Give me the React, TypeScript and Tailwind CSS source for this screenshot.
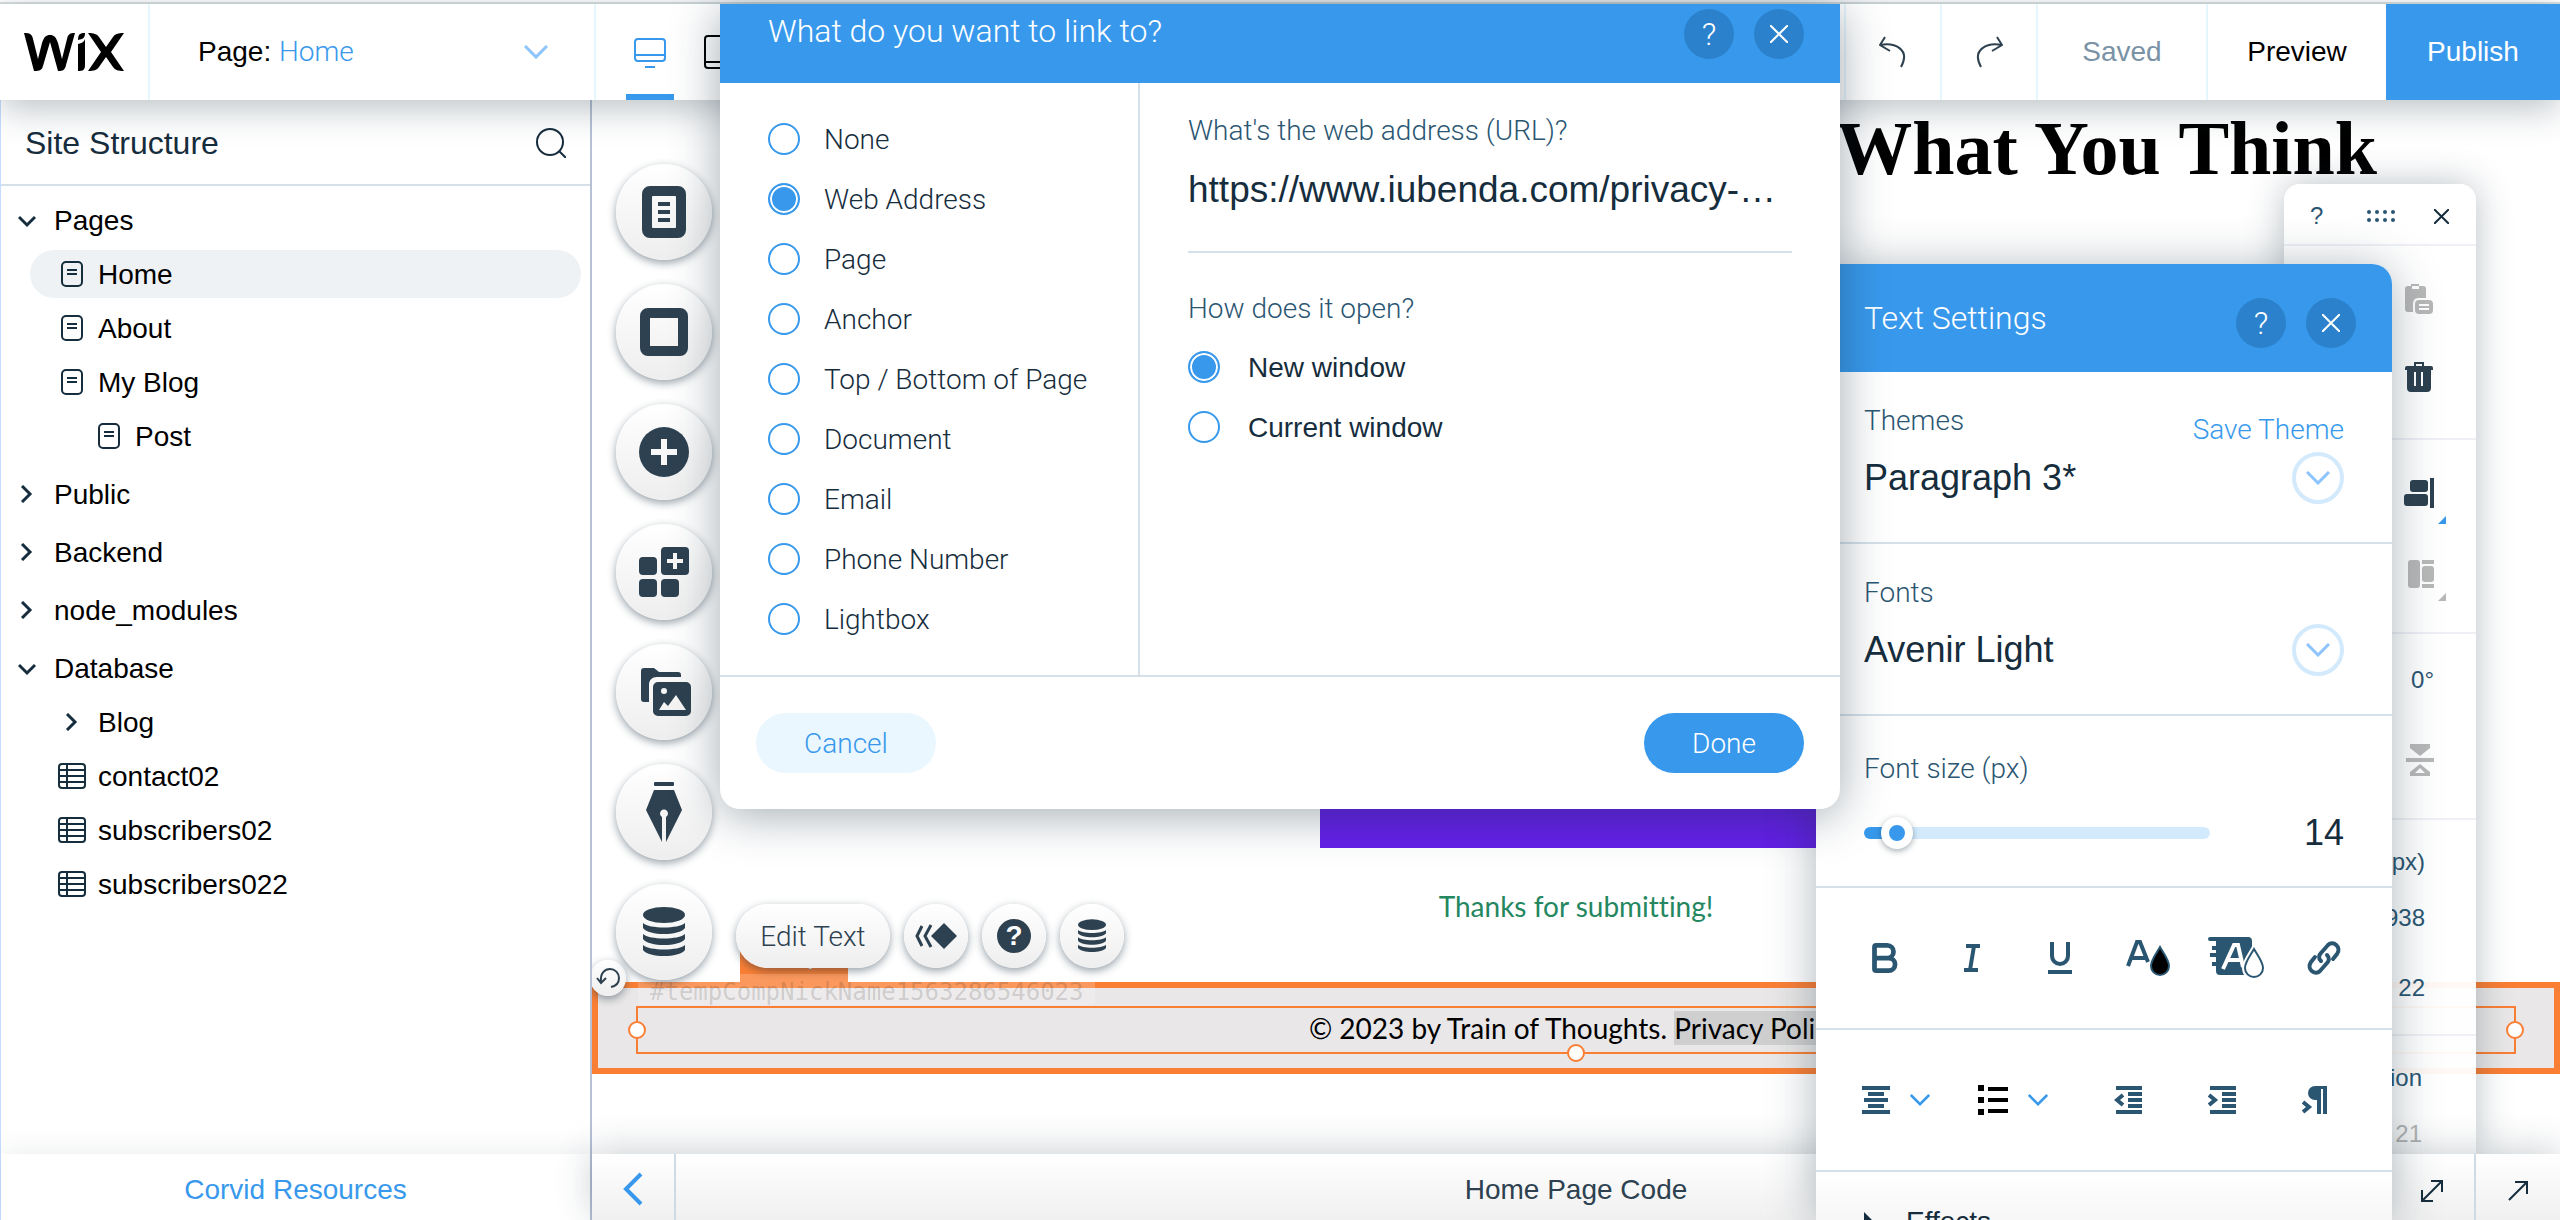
import React from 'react';
import { Bold } from 'lucide-react';

const linkTypes = [
  'None', 'Web Address', 'Page', 'Anchor', 'Top / Bottom of Page',
  'Document', 'Email', 'Phone Number', 'Lightbox',
];

type TreeRow = {
  label: string;
  kind: 'open' | 'closed' | 'page' | 'table';
  level: number;
  active?: boolean;
};

const tree: TreeRow[] = [
  { label: 'Pages', kind: 'open', level: 0 },
  { label: 'Home', kind: 'page', level: 1, active: true },
  { label: 'About', kind: 'page', level: 1 },
  { label: 'My Blog', kind: 'page', level: 1 },
  { label: 'Post', kind: 'page', level: 2 },
  { label: 'Public', kind: 'closed', level: 0 },
  { label: 'Backend', kind: 'closed', level: 0 },
  { label: 'node_modules', kind: 'closed', level: 0 },
  { label: 'Database', kind: 'open', level: 0 },
  { label: 'Blog', kind: 'closed', level: 1 },
  { label: 'contact02', kind: 'table', level: 1 },
  { label: 'subscribers02', kind: 'table', level: 1 },
  { label: 'subscribers022', kind: 'table', level: 1 },
];

const light = "font-[Roboto,'Liberation_Sans',sans-serif] font-light";
const round = 'flex items-center justify-center rounded-full bg-linear-to-b from-white to-[#eeeeee] text-[#2d4150] shadow-[0_3px_8px_rgba(22,45,61,0.45)]';

/* ---------- icons ---------- */

const WixLogo: React.FC = () => (
  <svg className="w-[100px] h-[39px]" viewBox="0 0 100 39" fill="currentColor">
    <path d="M0 0c6 0 8 1 9 6l5 20 4-16c2-6 4-8 8-8s6 2 8 8l4 16 5-20c1-5 3-6 8-6l-9 32c-1 5-3 6-8 6L26 9l-7 24c-1 4-3 5-9 5z" />
    <path d="M54 7c0-6 2-7 7-7 0 5-2 6-7 7z" />
    <path d="M54 11c4-1 6-2 7-5v26c0 5-2 6-7 6z" />
    <path d="M64 0c6 0 9 1 11 4l7 10 7-10c2-3 5-4 11-4L87 19l13 19c-6 0-9-1-11-4l-7-10-7 10c-2 3-5 4-11 4l13-19z" />
  </svg>
);

const Chevron: React.FC<{ className: string; width?: number }> = ({ className, width = 2 }) => (
  <svg className={className} viewBox="0 0 24 14" fill="none" stroke="currentColor" strokeWidth={width}>
    <path d="M1 1l11 11L23 1" />
  </svg>
);

const TreeIcon: React.FC<{ kind: TreeRow['kind'] }> = ({ kind }) => {
  if (kind === 'page') {
    return (
      <svg className="w-[22px] h-[26px]" viewBox="0 0 22 26" fill="none" stroke="#162d3d" strokeWidth="2">
        <rect x="1" y="1" width="20" height="24" rx="4" />
        <path d="M6 9h10M6 13h10" />
      </svg>
    );
  }
  if (kind === 'table') {
    return (
      <svg className="w-7 h-[26px]" viewBox="0 0 28 26" fill="none" stroke="#162d3d" strokeWidth="2">
        <rect x="1" y="1" width="26" height="24" rx="3" />
        <path d="M9 1v24M1 7h26M1 13h26M1 19h26" />
      </svg>
    );
  }
  return (
    <svg className="w-[18px] h-[18px]" viewBox="0 0 18 18" fill="none" stroke="#162d3d" strokeWidth="3">
      {kind === 'open' ? <path d="M1 6l8 8 8-8" /> : <path d="M4 1l8 8-8 8" />}
    </svg>
  );
};

const DatabaseIcon: React.FC<{ className: string }> = ({ className }) => (
  <svg className={className} viewBox="0 0 42 50" fill="currentColor">
    <ellipse cx="21" cy="8" rx="21" ry="8" />
    <path d="M0 16c6 6 36 6 42 0v5c-6 8-36 8-42 0z" />
    <path d="M0 27c6 6 36 6 42 0v5c-6 8-36 8-42 0z" />
    <path d="M0 38c6 6 36 6 42 0v5c-6 8-36 8-42 0z" />
  </svg>
);

const railTools = [
  {
    name: 'Menus and pages',
    icon: (
      <svg className="w-11 h-[52px]" viewBox="0 0 44 52" fill="currentColor">
        <path fillRule="evenodd" d="M8 0h28a8 8 0 018 8v36a8 8 0 01-8 8H8a8 8 0 01-8-8V8a8 8 0 018-8zm3 10a1 1 0 00-1 1v30a1 1 0 001 1h22a1 1 0 001-1V11a1 1 0 00-1-1z" />
        <path d="M16 16h12v4H16zM16 24h12v4H16zM16 32h12v4H16z" />
      </svg>
    ),
  },
  {
    name: 'Background',
    icon: (
      <svg className="w-12 h-12" viewBox="0 0 48 48" fill="currentColor">
        <path fillRule="evenodd" d="M8 0h32a8 8 0 018 8v32a8 8 0 01-8 8H8a8 8 0 01-8-8V8a8 8 0 018-8zm2 10v28h28V10z" />
      </svg>
    ),
  },
  {
    name: 'Add',
    icon: (
      <svg className="w-[50px] h-[50px]" viewBox="0 0 50 50">
        <circle cx="25" cy="25" r="25" fill="currentColor" />
        <path d="M12 25h26M25 12v26" stroke="#f7f7f7" strokeWidth="6" />
      </svg>
    ),
  },
  {
    name: 'Add apps',
    icon: (
      <svg className="w-[50px] h-[50px]" viewBox="0 0 50 50" fill="currentColor">
        <rect y="10" width="18" height="18" rx="4" />
        <rect x="22" width="28" height="28" rx="4" />
        <rect y="32" width="18" height="18" rx="4" />
        <rect x="22" y="32" width="18" height="18" rx="4" />
        <path d="M28 14h16M36 6v16" stroke="#f7f7f7" strokeWidth="4" />
      </svg>
    ),
  },
  {
    name: 'Media',
    icon: (
      <svg className="w-[50px] h-12 ml-1" viewBox="0 0 50 48" fill="currentColor">
        <path d="M3 0h10l5 4h19a3 3 0 013 3v2H16c-5 0-8 3-8 8v17H3a3 3 0 01-3-3V3a3 3 0 013-3z" />
        <path fillRule="evenodd" d="M17 14h28a5 5 0 015 5v24a5 5 0 01-5 5H17a5 5 0 01-5-5V19a5 5 0 015-5zm6 6a3 3 0 100 6 3 3 0 000-6zm-5 22h27L35 27l-8 11-4-4z" />
      </svg>
    ),
  },
  {
    name: 'Blog',
    icon: (
      <svg className="w-9 h-[60px]" viewBox="0 0 36 60" fill="currentColor">
        <rect x="8" width="20" height="4" rx="1" />
        <path fillRule="evenodd" d="M8 8h20l8 20-16 32V35a4 4 0 10-4 0v25L0 28z" />
        <path d="M17 36h2v24h-2z" fill="#f4f4f4" />
      </svg>
    ),
  },
  { name: 'Database', icon: <DatabaseIcon className="w-[42px] h-[50px]" /> },
];

/* ---------- shared controls ---------- */

const RadioOption: React.FC<{ group: string; label: string; checked?: boolean; className: string }> = ({ group, label, checked, className }) => (
  <label className={`flex items-center h-8 cursor-pointer text-[28px] text-[#162d3d] ${className}`}>
    <input
      type="radio"
      name={group}
      defaultChecked={checked}
      className="appearance-none shrink-0 w-8 h-8 rounded-full border-2 border-[#3899ec] bg-white checked:bg-[#3899ec] checked:shadow-[inset_0_0_0_2px_white]"
    />
    <span className="pt-[2px]">{label}</span>
  </label>
);

const DialogButtons: React.FC = () => (
  <div className="flex gap-5">
    <button type="button" aria-label="Help" className={`w-[50px] h-[50px] rounded-full bg-[#2b81cb] text-white text-[32px] leading-[50px] ${light}`}>?</button>
    <button type="button" aria-label="Close" className="w-[50px] h-[50px] rounded-full bg-[#2b81cb] flex items-center justify-center">
      <svg className="w-[18px] h-[18px]" viewBox="0 0 18 18" stroke="white" strokeWidth="2">
        <path d="M0 0l18 18M18 0L0 18" />
      </svg>
    </button>
  </div>
);

/* ---------- page parts ---------- */

const TopBar: React.FC = () => (
  <header className="relative z-10 flex h-24 shrink-0 bg-white text-[28px] shadow-[0_8px_36px_rgba(22,45,61,0.3)]">
    <a href="#" aria-label="Wix" className="w-[150px] border-r-2 border-[#e6f6fd] flex items-center justify-center">
      <WixLogo />
    </a>
    <button type="button" className="w-[446px] border-r-2 border-[#e6f6fd] flex items-center justify-between pl-12 pr-[46px]">
      <span>Page: <span className={`text-[#3899ec] ${light}`}>Home</span></span>
      <Chevron className="w-6 h-[14px] text-[#8cc4fb]" width={3} />
    </button>
    <nav className="flex flex-1 pl-[30px] gap-[30px]">
      <button type="button" aria-label="Desktop" className="w-12 border-b-6 border-[#3899ec] flex items-center justify-center">
        <svg className="w-8 h-[30px] mt-2" viewBox="0 0 32 30" fill="none" stroke="#3899ec" strokeWidth="2">
          <rect x="1" y="1" width="30" height="22" rx="3" />
          <path d="M1 17h30M11 29h10" />
        </svg>
      </button>
      <button type="button" aria-label="Mobile" className="flex items-center">
        <svg className="w-6 h-[34px]" viewBox="0 0 24 34" fill="none" stroke="black" strokeWidth="2">
          <rect x="1" y="1" width="22" height="32" rx="3" />
          <path d="M1 27h22" />
        </svg>
      </button>
    </nav>
    <button type="button" aria-label="Undo" className="w-24 border-l-2 border-[#e6f6fd] flex items-center justify-center">
      <svg className="w-7 h-8" viewBox="0 0 28 32" fill="none" stroke="#2d4150" strokeWidth="2">
        <path d="M6 1L1 9l10 6M1 9c14-3 31 4 21 22" />
      </svg>
    </button>
    <button type="button" aria-label="Redo" className="w-24 border-l-2 border-[#e6f6fd] flex items-center justify-center">
      <svg className="w-7 h-8" viewBox="0 0 28 32" fill="none" stroke="#2d4150" strokeWidth="2">
        <path d="M22 1l5 8-10 6M27 9C13 6-4 13 6 31" />
      </svg>
    </button>
    <button type="button" className="w-[170px] border-l-2 border-[#e6f6fd] text-[#7a92a5]">Saved</button>
    <button type="button" className="w-[180px] border-l-2 border-[#e6f6fd]">Preview</button>
    <button type="button" className="w-[174px] bg-[#3899ec] text-white">Publish</button>
  </header>
);

const Sidebar: React.FC = () => (
  <aside className="w-[592px] shrink-0 flex flex-col border-l border-l-[#c5dbff] border-r-2 border-r-[#b6c1d5]">
    <div className="h-[86px] flex items-center justify-between px-6 pt-[2px] border-b-2 border-[#d6e0e9]">
      <h2 className="text-[32px] text-[#162d3d]">Site Structure</h2>
      <button type="button" aria-label="Search">
        <svg className="w-[30px] h-[30px]" viewBox="0 0 30 30" fill="none" stroke="#162d3d" strokeWidth="2">
          <circle cx="14" cy="14" r="13" />
          <path d="M23 23l7 7" />
        </svg>
      </button>
    </div>
    <ul className="flex-1 pt-[7px] text-[28px]">
      {tree.map((row) => (
        <li key={row.label} className={`h-[54px] flex items-center pl-[29px] pr-[9px] ${row.level === 0 && row.label !== 'Pages' ? 'mt-1' : ''}`}>
          <button
            type="button"
            className={`flex items-center w-full h-12 rounded-full ${row.active ? 'bg-[#eef2f5]' : ''} ${row.level === 2 ? 'pl-[61px]' : row.level === 1 ? 'pl-6' : ''}`}
          >
            <span className={row.level === 0 ? 'w-6 -ml-3 mr-3 flex' : 'w-11 flex justify-center pr-2'}>
              <TreeIcon kind={row.kind} />
            </span>
            <span className="pt-[2px]">{row.label}</span>
          </button>
        </li>
      ))}
    </ul>
    <div className="h-[66px] pt-[6px] flex items-center justify-center bg-white shadow-[0_-4px_24px_rgba(22,45,61,0.08)]">
      <a href="#" className="text-[28px] text-[#3899ec]">Corvid Resources</a>
    </div>
  </aside>
);

const Handle: React.FC<{ className: string }> = ({ className }) => (
  <span className={`absolute w-[18px] h-[18px] rounded-full border-2 border-[#fa7f35] bg-white ${className}`} />
);

const FooterStrip: React.FC = () => (
  <footer className="relative self-stretch mt-14 border-6 border-[#fa7f35] bg-[#e9e7e7] pt-[18px] pb-[14px] px-[38px]">
    <div className="relative h-12 border-2 border-[#fa7f35] flex items-center justify-center">
      <p className="text-[28px] leading-[34px] font-[Lato,sans-serif] pb-[4px]">
        © 2023 by Train of Thoughts. <span className="bg-[#cfcfcf]">Privacy Policy</span>
      </p>
      <Handle className="-left-[10px] top-[13px]" />
      <Handle className="-right-[10px] top-[13px]" />
      <Handle className="left-1/2 -translate-x-1/2 -bottom-[10px]" />
    </div>

    {/* Component tag and id, tucked under the action bar */}
    <span className="absolute left-[142px] -top-[54px] w-[108px] h-12 bg-[#fa7f35] text-white text-[28px] leading-10 text-center">Strip</span>
    <span className="absolute left-10 -top-[14px] h-[31px] px-3 bg-white/20 text-black/15 text-[24px] leading-9 font-['DejaVu_Sans_Mono',monospace]">
      #tempCompNickName1563286546023
    </span>

    <div className="absolute left-[138px] -top-[84px] flex gap-[14px]">
      <button type="button" className={`${round} w-[154px] h-16 pt-[2px] text-[28px] ${light}`}>Edit Text</button>
      <button type="button" aria-label="Animation" className={`${round} w-16 h-16`}>
        <svg className="w-[42px] h-[26px]" viewBox="0 0 42 26" fill="none" stroke="currentColor" strokeWidth="3">
          <path d="M7 3l-5 10 5 10M16 2l-6 11 6 11" />
          <path d="M29 0l13 13-13 13-13-13z" fill="currentColor" stroke="none" />
        </svg>
      </button>
      <button type="button" aria-label="Help" className={`${round} w-16 h-16`}>
        <span className="w-[34px] h-[34px] rounded-full bg-[#2d4150] text-white text-[28px] leading-[34px] font-bold">?</span>
      </button>
      <button type="button" aria-label="Connect to data" className={`${round} w-16 h-16`}>
        <DatabaseIcon className="w-7 h-[34px]" />
      </button>
    </div>

    <button type="button" aria-label="Undo change" className={`${round} absolute -left-2 -top-7 w-9 h-9`}>
      <svg className="w-6 h-6" viewBox="0 0 24 24" fill="none" stroke="currentColor" strokeWidth="2">
        <path d="M1 12l4 5 5-5M5 16C4 7 9 3 14 3s9 4 9 9-3 8-8 9" />
      </svg>
    </button>
  </footer>
);

const ToolPanel: React.FC = () => (
  <section aria-label="Tools" className="absolute right-[84px] top-[84px] bottom-0 w-48 rounded-t-2xl bg-white/95 text-[#2b5672] text-[24px] shadow-[0_0_36px_rgba(22,45,61,0.3)]">
    <div className="h-[62px] pt-1 border-b-2 border-[#eef0f6] flex items-center justify-between pl-[26px] pr-[27px]">
      <button type="button" aria-label="Help">?</button>
      <svg className="w-7 h-3 ml-1" viewBox="0 0 28 12" fill="currentColor">
        {[2, 10, 18, 26].map((x) => (
          <g key={x}>
            <circle cx={x} cy="2" r="2" />
            <circle cx={x} cy="10" r="2" />
          </g>
        ))}
      </svg>
      <button type="button" aria-label="Close">
        <svg className="w-[15px] h-[15px]" viewBox="0 0 15 15" stroke="#162d3d" strokeWidth="2">
          <path d="M0 0l15 15M15 0L0 15" />
        </svg>
      </button>
    </div>
    <div className="h-[194px] border-b-2 border-[#eef0f6] flex flex-col items-end gap-12 pt-[38px] pr-[43px]">
      <button type="button" aria-label="Paste">
        <svg className="w-7 h-[30px]" viewBox="0 0 28 30" fill="#b8b8b8">
          <path fillRule="evenodd" d="M3 2h3V0h8v2h4a3 3 0 013 3v9h-7c-4 0-6 2-6 6v8H3a3 3 0 01-3-3V5a3 3 0 013-3zm4 0v3h7V2z" />
          <path fillRule="evenodd" d="M14 16h10a4 4 0 014 4v6a4 4 0 01-4 4H14a4 4 0 01-4-4v-6a4 4 0 014-4zm0 4v2h10v-2zm0 4v2h10v-2z" />
        </svg>
      </button>
      <button type="button" aria-label="Delete">
        <svg className="w-7 h-[30px]" viewBox="0 0 28 30" fill="#2d4150">
          <path fillRule="evenodd" d="M9 4V0h10v4h7a2 2 0 012 2v2h-2v18a4 4 0 01-4 4H6a4 4 0 01-4-4V8H0V6a2 2 0 012-2zm2 0h6V2h-6zM9 10v14h2V10zm7 0v14h2V10z" />
        </svg>
      </button>
    </div>
    <div className="h-[194px] border-b-2 border-[#eef0f6] flex flex-col items-end gap-9 pt-[38px] pr-[30px]">
      <button type="button" aria-label="Align">
        <svg className="w-[42px] h-[46px]" viewBox="0 0 42 46" fill="#2d4150">
          <rect x="6" y="2" width="18" height="12" rx="3" />
          <rect y="16" width="24" height="12" rx="3" />
          <rect x="26" width="4" height="30" />
          <path d="M42 38v8h-8z" fill="#3899ec" />
        </svg>
      </button>
      <button type="button" aria-label="Distribute">
        <svg className="w-[38px] h-[42px]" viewBox="0 0 38 42" fill="#b8b8b8">
          <rect y="0" width="12" height="28" rx="3" />
          <rect x="14" y="6" width="12" height="16" rx="3" />
          <rect x="14" width="12" height="4" />
          <rect x="14" y="24" width="12" height="4" />
          <path d="M38 33v8h-8z" />
        </svg>
      </button>
    </div>
    <div className="h-[186px] border-b-2 border-[#eef0f6] flex flex-col items-end pt-[30px] pr-[42px]">
      <span className="leading-8">0°</span>
      <button type="button" aria-label="Flip" className="mt-12">
        <svg className="w-7 h-8" viewBox="0 0 28 32" fill="#b8b8b8">
          <path d="M4 0h20v4L14 12 4 4zM0 14h28v4H0z" />
          <path fillRule="evenodd" d="M14 20l10 8v4H4v-4zm-5 9h10l-5-5z" />
        </svg>
      </button>
    </div>
    <dl className="h-[216px] border-b-2 border-[#eef0f6] pt-[26px] pr-[51px] leading-8 text-right">
      <dt>Size (px)</dt>
      <dd className="mt-6">938</dd>
      <dd className="mt-[38px]">22</dd>
    </dl>
    <dl className="pt-[26px] pr-[54px] leading-8 text-right">
      <dt>Position</dt>
      <dd className="mt-6 text-[#b8b8b8]">21</dd>
    </dl>
  </section>
);

const BottomBar: React.FC = () => (
  <div className="relative h-[66px] shrink-0 flex bg-linear-to-b from-white to-[#f0f0f0] text-[#2d4150] shadow-[0_-4px_36px_rgba(22,45,61,0.22)]">
    <button type="button" aria-label="Back" className="w-[84px] pt-1 border-r-2 border-[#cfdbe4] flex items-center justify-center">
      <svg className="w-5 h-[34px]" viewBox="0 0 20 34" fill="none" stroke="#3899ec" strokeWidth="4">
        <path d="M18 2L3 17l15 15" />
      </svg>
    </button>
    <span className="absolute inset-x-0 pt-[3px] text-center text-[28px] leading-[66px] pointer-events-none">Home Page Code</span>
    <button type="button" aria-label="Expand" className="ml-auto w-[84px] pt-2 flex items-center justify-center">
      <svg className="w-[22px] h-[22px]" viewBox="0 0 22 22" fill="none" stroke="#162d3d" strokeWidth="2">
        <path d="M1 21L21 1M10 1h11v11M1 10v11h11" />
      </svg>
    </button>
    <button type="button" aria-label="Maximize" className="w-[86px] pt-2 border-l-2 border-[#cfdbe4] flex items-center justify-center">
      <svg className="w-5 h-5" viewBox="0 0 20 20" fill="none" stroke="#162d3d" strokeWidth="2">
        <path d="M1 19L19 1M7 1h12v12" />
      </svg>
    </button>
  </div>
);

const LinkDialog: React.FC = () => (
  <section role="dialog" aria-label="What do you want to link to?" className="absolute z-30 left-[720px] top-1 w-[1120px] rounded-b-[20px] overflow-hidden bg-white shadow-[0_6px_48px_rgba(22,45,61,0.4)]">
    <div className="h-[79px] bg-[#3899ec] flex justify-between pt-[5px] pl-12 pr-9">
      <h2 className={`pt-[2px] text-[32px] leading-10 text-white ${light}`}>What do you want to link to?</h2>
      <DialogButtons />
    </div>
    <div className="flex border-b-2 border-[#d6e0e9]">
      <fieldset className="w-[420px] border-r-2 border-[#d6e0e9] flex flex-col gap-7 py-10 pl-12">
        {linkTypes.map((type) => (
          <RadioOption key={type} group="link-type" label={type} checked={type === 'Web Address'} className={`gap-6 ${light}`} />
        ))}
      </fieldset>
      <div className="flex-1 pt-7 px-12">
        <label htmlFor="url" className={`block text-[28px] leading-10 text-[#2b5672] ${light}`}>What's the web address (URL)?</label>
        <input
          id="url"
          type="text"
          defaultValue="https://www.iubenda.com/privacy-…"
          className="block w-full h-[102px] pb-[22px] border-b-2 border-[#d6e0e9] text-[37px] text-[#162d3d] outline-none"
        />
        <fieldset className="mt-9 flex flex-col gap-7">
          <legend className={`mb-[22px] text-[28px] leading-10 text-[#2b5672] ${light}`}>How does it open?</legend>
          <RadioOption group="target" label="New window" checked className="gap-7" />
          <RadioOption group="target" label="Current window" className="gap-7" />
        </fieldset>
      </div>
    </div>
    <div className="flex justify-between p-9">
      <button type="button" className={`w-[180px] h-[60px] pt-[2px] rounded-full bg-[#eaf7ff] text-[#3899ec] text-[28px] ${light}`}>Cancel</button>
      <button type="button" className={`w-[160px] h-[60px] pt-[2px] rounded-full bg-[#3899ec] text-white text-[28px] ${light}`}>Done</button>
    </div>
  </section>
);

const RoundChevron: React.FC<{ label: string }> = ({ label }) => (
  <button type="button" aria-label={label} className="w-[52px] h-[52px] rounded-full border-4 border-[#d3eafd] text-[#8cc4fb] flex items-center justify-center">
    <Chevron className="w-6 h-[14px]" width={3} />
  </button>
);

const TextSettings: React.FC = () => (
  <section role="dialog" aria-label="Text Settings" className="absolute z-20 right-[168px] top-[264px] bottom-0 w-[576px] rounded-t-[20px] overflow-hidden bg-white text-[#2b5672] text-[28px] leading-10 shadow-[0_4px_48px_rgba(22,45,61,0.35)]">
    <div className="h-[108px] bg-[#3899ec] flex justify-between pt-[34px] pl-12 pr-9">
      <h2 className={`text-[32px] leading-10 text-white ${light}`}>Text Settings</h2>
      <DialogButtons />
    </div>
    <div className="h-[172px] border-b-2 border-[#d6e0e9] px-12 pt-[29px] flex justify-between">
      <div>
        <h3 className={light}>Themes</h3>
        <p className="mt-[17px] text-[36px] text-[#162d3d]">Paragraph 3*</p>
      </div>
      <div className="flex flex-col items-end gap-[2px] pt-[9px]">
        <a href="#" className={`text-[#3899ec] ${light}`}>Save Theme</a>
        <RoundChevron label="Choose theme" />
      </div>
    </div>
    <div className="h-[172px] border-b-2 border-[#d6e0e9] px-12 pt-[29px] flex justify-between">
      <div>
        <h3 className={light}>Fonts</h3>
        <p className="mt-[17px] text-[36px] text-[#162d3d]">Avenir Light</p>
      </div>
      <div className="pt-[51px]">
        <RoundChevron label="Choose font" />
      </div>
    </div>
    <div className="h-[172px] border-b-2 border-[#d6e0e9] px-12 pt-[33px]">
      <label htmlFor="font-size" className={`block ${light}`}>Font size (px)</label>
      <div className="mt-6 flex items-center justify-between">
        <input
          id="font-size"
          type="range"
          min={6}
          max={176}
          defaultValue={15}
          className="appearance-none w-[346px] h-3 rounded-full bg-linear-to-r from-[#3899ec] from-10% to-[#d3eafd] to-10% [&::-webkit-slider-thumb]:appearance-none [&::-webkit-slider-thumb]:w-8 [&::-webkit-slider-thumb]:h-8 [&::-webkit-slider-thumb]:rounded-full [&::-webkit-slider-thumb]:border-8 [&::-webkit-slider-thumb]:border-white [&::-webkit-slider-thumb]:bg-[#3899ec] [&::-webkit-slider-thumb]:shadow-[0_2px_6px_rgba(22,45,61,0.4)]"
        />
        <span className="text-[36px] text-[#162d3d]">14</span>
      </div>
    </div>
    <div className="h-[142px] border-b-2 border-[#d6e0e9] grid grid-cols-6 items-center justify-items-center px-6">
      <button type="button" aria-label="Bold"><Bold size={38} strokeWidth={3} /></button>
      <button type="button" aria-label="Italic">
        <svg className="w-4 h-7" viewBox="0 0 16 28" fill="none" stroke="currentColor" strokeWidth="4">
          <path d="M2 2h14M0 26h14M10 2L6 26" />
        </svg>
      </button>
      <button type="button" aria-label="Underline">
        <svg className="w-6 h-8" viewBox="0 0 24 32" fill="none" stroke="currentColor" strokeWidth="4">
          <path d="M4 0v14a8 8 0 0016 0V0M0 30h24" />
        </svg>
      </button>
      <button type="button" aria-label="Text color">
        <svg className="w-11 h-9" viewBox="0 0 44 36" fill="none" stroke="currentColor" strokeWidth="4">
          <path d="M2 26L11 2h3l8 20M6 18h13" />
          <path d="M34 7c4 7 9 13 9 19a9 9 0 01-18 0c0-6 5-12 9-19z" fill="black" strokeWidth="2" />
        </svg>
      </button>
      <button type="button" aria-label="Highlight color">
        <svg className="w-14 h-[42px]" viewBox="0 0 56 42">
          <path d="M2 0h38a4 4 0 014 4v34H12a4 4 0 01-4-4v-5H4v-4h4v-5H2v-4h6v-3H4V9h4V4H2a2 2 0 010-4z" fill="currentColor" />
          <path d="M15 32L26 8h4l5 22M20 23h12" fill="none" stroke="white" strokeWidth="4" />
          <path d="M46 12c4 7 9 13 9 19a9 9 0 01-18 0c0-6 5-12 9-19z" fill="white" stroke="white" strokeWidth="6" />
          <path d="M46 12c4 7 9 13 9 19a9 9 0 01-18 0c0-6 5-12 9-19z" fill="white" stroke="currentColor" strokeWidth="2" />
        </svg>
      </button>
      <button type="button" aria-label="Link">
        <svg className="w-9 h-9" viewBox="0 0 36 36" fill="none" stroke="currentColor" strokeWidth="4" strokeLinecap="round">
          <path d="M15 21c-3-3-2-6 0-8l7-8c5-5 14 2 9 9l-4 5" />
          <path d="M21 15c3 3 2 6 0 8l-7 8c-5 5-14-2-9-9l4-5" />
        </svg>
      </button>
    </div>
    <div className="h-[142px] border-b-2 border-[#d6e0e9] flex items-center gap-[66px] pl-[46px]">
      <div className="flex gap-12">
        <button type="button" aria-label="Alignment" className="flex items-center gap-5">
          <svg className="w-7 h-7" viewBox="0 0 28 28" stroke="currentColor" strokeWidth="4">
            <path d="M0 2h28M6 8h16M2 14h24M6 20h16M0 26h28" />
          </svg>
          <Chevron className="w-5 h-3 text-[#3899ec]" width={3} />
        </button>
        <button type="button" aria-label="List style" className="flex items-center gap-5">
          <svg className="w-[30px] h-[30px]" viewBox="0 0 30 30" stroke="black" strokeWidth="4">
            <path d="M10 4h20M10 15h20M10 26h20" />
            <path d="M0 3h6M0 15h6M0 27h6" strokeWidth="6" />
          </svg>
          <Chevron className="w-5 h-3 text-[#3899ec]" width={3} />
        </button>
      </div>
      <button type="button" aria-label="Outdent">
        <svg className="w-7 h-7" viewBox="0 0 28 28" fill="none" stroke="currentColor" strokeWidth="4">
          <path d="M2 2h26M14 8h14M14 14h14M14 20h14M2 26h26M9 9l-6 5 6 5" />
        </svg>
      </button>
      <button type="button" aria-label="Indent">
        <svg className="w-7 h-7" viewBox="0 0 28 28" fill="none" stroke="currentColor" strokeWidth="4">
          <path d="M2 2h26M14 8h14M14 14h14M14 20h14M2 26h26M1 9l6 5-6 5" />
        </svg>
      </button>
      <button type="button" aria-label="Text direction">
        <svg className="w-[26px] h-[28px]" viewBox="0 0 26 28" fill="currentColor">
          <path d="M13 0h12v28h-4V3h-2v25h-4V14h-2a7 7 0 010-14z" />
          <path d="M1 16l6 5-6 5" fill="none" stroke="currentColor" strokeWidth="4" />
        </svg>
      </button>
    </div>
    <button type="button" className="w-full h-24 flex gap-8 pl-12 pt-[30px] text-left text-[#162d3d] bg-linear-to-b from-white to-[#eeeeee]">
      <svg className="w-[10px] h-5 mt-[10px]" viewBox="0 0 10 20" fill="currentColor">
        <path d="M0 0l10 10L0 20z" />
      </svg>
      Effects
    </button>
  </section>
);

export default function App() {
  return (
    <div className="relative flex flex-col h-screen overflow-hidden bg-white text-black font-['Liberation_Sans',Arial,sans-serif]">
      <div className="h-1 shrink-0 border-b-2 border-[#d8dfe0]" />
      <TopBar />
      <div className="flex flex-1 min-h-0">
        <Sidebar />
        <main className="flex-1 min-w-0 flex flex-col">
          <div className="relative flex-1 min-h-0 overflow-hidden flex flex-col items-center">
            <h1 className="self-end pt-2 pb-1 pr-[183px] text-[76px] leading-20 font-bold font-['Liberation_Serif',serif]">What You Think</h1>
            <button type="button" aria-label="Submit" className="mt-140 w-[512px] h-24 bg-[#6420e8]" />
            <p className="mt-[38px] text-[28px] leading-10 text-[#24875f] font-[Lato,sans-serif] [font-variant-ligatures:none]">Thanks for submitting!</p>
            <FooterStrip />
            <div className="absolute left-6 top-16 flex flex-col gap-6">
              {railTools.map((tool) => (
                <button key={tool.name} type="button" aria-label={tool.name} className={`${round} w-24 h-24`}>
                  {tool.icon}
                </button>
              ))}
            </div>
            <ToolPanel />
          </div>
          <BottomBar />
        </main>
      </div>
      <TextSettings />
      <LinkDialog />
    </div>
  );
}
